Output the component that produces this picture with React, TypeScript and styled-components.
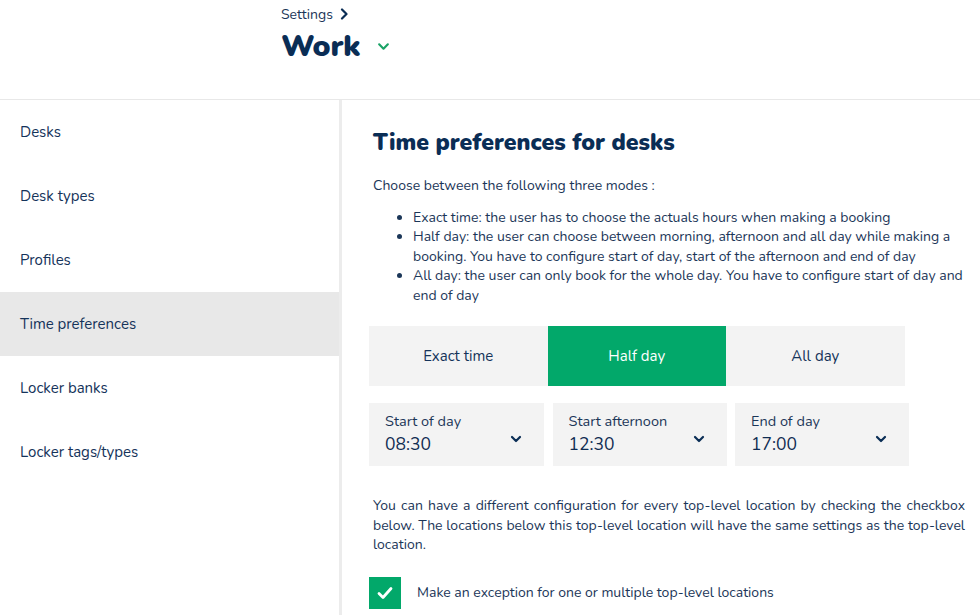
import React, { useState } from "react";
import styled, { createGlobalStyle } from "styled-components";

const Global = createGlobalStyle`
  html, body { margin: 0; padding: 0; background: #fff; }
  body { font-family: "Nunito", "Lato", "Noto Sans", sans-serif; color: #0f2c52; }
  * { box-sizing: border-box; }
`;

const Page = styled.div`
  width: 980px;
  height: 615px;
  overflow: hidden;
  display: flex;
  flex-direction: column;
`;

const Header = styled.header`
  height: 100px;
  border-bottom: 1px solid #e8e8e8;
  padding: 4px 0 0 281px;
  flex-shrink: 0;
`;

const Crumb = styled.div`
  display: flex;
  align-items: center;
  gap: 6px;
  font-size: 14px;
  color: #1b3658;
  height: 20px;
`;

const TitleRow = styled.div`
  display: flex;
  align-items: center;
  gap: 16px;
  margin-top: 2px;
`;

const PageTitle = styled.h1`
  margin: 0;
  font-size: 30px;
  font-weight: 900;
  color: #0a2d55;
  letter-spacing: -0.2px;
`;

const Body = styled.div`
  flex: 1;
  display: flex;
`;

const Sidebar = styled.nav`
  width: 342px;
  border-right: 3px solid #ececec;
  flex-shrink: 0;
`;

const NavItem = styled.div<{ $active?: boolean }>`
  height: 64px;
  display: flex;
  align-items: center;
  padding-left: 20px;
  padding-bottom: 1px;
  font-size: 15px;
  color: #15335a;
  background: ${(p) => (p.$active ? "#e8e8e8" : "transparent")};
  cursor: pointer;
`;

const Main = styled.main`
  flex: 1;
  padding: 28px 0 0 27px;
`;

const SectionTitle = styled.h2`
  margin: 0 0 0 4px;
  font-size: 23px;
  font-weight: 900;
  color: #0a2d55;
  line-height: 30px;
`;

const Text = styled.p`
  margin: 0 0 0 4px;
  font-size: 14px;
  line-height: 19.5px;
  color: #1b3658;
`;

const Intro = styled(Text)`
  margin-top: 18px;
`;

const List = styled.ul`
  margin: 12px 0 0 0;
  padding-left: 44px;
  padding-right: 10px;
  font-size: 14px;
  line-height: 19.5px;
  color: #1b3658;
  li { margin: 0; }
`;

const Segmented = styled.div`
  margin-top: 21px;
  display: grid;
  grid-template-columns: repeat(3, 178.5px);
  width: 536px;
`;

const Segment = styled.button<{ $active?: boolean }>`
  height: 60px;
  border: none;
  font-family: inherit;
  font-size: 15px;
  color: ${(p) => (p.$active ? "#fff" : "#15335a")};
  background: ${(p) => (p.$active ? "#02a86a" : "#f3f3f3")};
  cursor: pointer;
`;

const Selects = styled.div`
  margin-top: 17px;
  display: grid;
  grid-template-columns: 175px 174px 174px;
  gap: 0 8.5px;
`;

const Select = styled.div`
  height: 63px;
  background: #f3f3f3;
  padding: 8px 22px 0 16px;
  display: flex;
  align-items: center;
  justify-content: space-between;
`;

const SelectTexts = styled.div`
  display: flex;
  flex-direction: column;
  align-self: flex-start;
`;

const SelectLabel = styled.span`
  font-size: 14.5px;
  line-height: 20px;
  color: #1b3658;
`;

const SelectValue = styled.span`
  font-size: 17.5px;
  line-height: 26px;
  color: #0f2c52;
`;

const Note = styled(Text)`
  margin-top: 30px;
  width: 592px;
  text-align: justify;
`;

const CheckRow = styled.label`
  margin-top: 22px;
  display: flex;
  align-items: center;
  gap: 16px;
  font-size: 14px;
  color: #1b3658;
`;

const Box = styled.span`
  width: 32px;
  height: 32px;
  background: #02a86a;
  display: flex;
  align-items: center;
  justify-content: center;
`;

const Chevron = ({ color, size = 12, sw = 2.4 }: { color: string; size?: number; sw?: number }) => (
  <svg width={size} height={size} viewBox="0 0 12 12" fill="none">
    <path d="M2 4l4 4 4-4" stroke={color} strokeWidth={sw} strokeLinecap="round" strokeLinejoin="round" />
  </svg>
);

const navItems = ["Desks", "Desk types", "Profiles", "Time preferences", "Locker banks", "Locker tags/types"];

export default function App() {
  const [mode, setMode] = useState("Half day");
  return (
    <Page>
      <Global />
      <Header>
        <Crumb>
          Settings
          <svg width="10" height="12" viewBox="0 0 10 12" fill="none">
            <path d="M3 1.5l4.5 4.5L3 10.5" stroke="#0a2d55" strokeWidth="2.2" strokeLinecap="round" strokeLinejoin="round" />
          </svg>
        </Crumb>
        <TitleRow>
          <PageTitle>Work</PageTitle>
          <Chevron color="#1aa366" size={13} sw={2} />
        </TitleRow>
      </Header>
      <Body>
        <Sidebar>
          {navItems.map((n) => (
            <NavItem key={n} $active={n === "Time preferences"}>
              {n}
            </NavItem>
          ))}
        </Sidebar>
        <Main>
          <SectionTitle>Time preferences for desks</SectionTitle>
          <Intro>Choose between the following three modes :</Intro>
          <List>
            <li>Exact time: the user has to choose the actuals hours when making a booking</li>
            <li>
              Half day: the user can choose between morning, afternoon and all day while making a booking. You have to
              configure start of day, start of the afternoon and end of day
            </li>
            <li>
              All day: the user can only book for the whole day. You have to configure start of day and end of day
            </li>
          </List>
          <Segmented>
            {["Exact time", "Half day", "All day"].map((m) => (
              <Segment key={m} $active={mode === m} onClick={() => setMode(m)}>
                {m}
              </Segment>
            ))}
          </Segmented>
          <Selects>
            {[
              ["Start of day", "08:30"],
              ["Start afternoon", "12:30"],
              ["End of day", "17:00"],
            ].map(([l, v]) => (
              <Select key={l}>
                <SelectTexts>
                  <SelectLabel>{l}</SelectLabel>
                  <SelectValue>{v}</SelectValue>
                </SelectTexts>
                <Chevron color="#0a2d55" size={12} sw={2.2} />
              </Select>
            ))}
          </Selects>
          <Note>
            You can have a different configuration for every top-level location by checking the checkbox below. The
            locations below this top-level location will have the same settings as the top-level location.
          </Note>
          <CheckRow>
            <Box>
              <svg width="16" height="14" viewBox="0 0 16 14" fill="none">
                <path d="M2 7.5l4 4L14 2.5" stroke="#fff" strokeWidth="2.8" strokeLinecap="round" strokeLinejoin="round" />
              </svg>
            </Box>
            Make an exception for one or multiple top-level locations
          </CheckRow>
        </Main>
      </Body>
    </Page>
  );
}
